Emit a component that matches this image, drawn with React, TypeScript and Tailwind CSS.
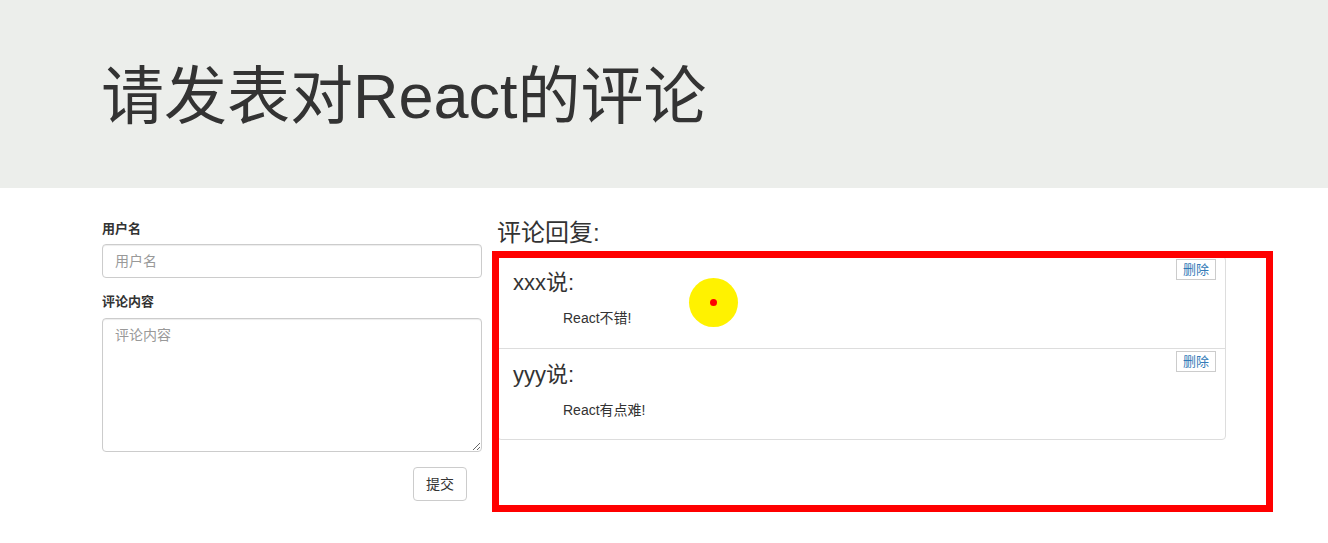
import { useState } from 'react';

interface Comment {
  username: string;
  content: string;
}

const FONT = "font-['Liberation_Sans','Noto_Sans_CJK_SC',sans-serif]";

function CommentItem({ c, first, onDelete }: { c: Comment; first: boolean; onDelete: () => void }) {
  return (
    <li className={`flex h-[91px] pl-[15px] pr-[9px] ${first ? '' : 'border-t border-[#ddd]'}`}>
      <div className="flex-1">
        <h4 className="mt-[12px] text-[22px] leading-[28px] text-[#333]">{c.username}说:</h4>
        <p className="ml-[50px] mt-[11px] text-[14px] leading-[20px] text-[#333]">{c.content}</p>
      </div>
      <button
        onClick={onDelete}
        className="mt-[2px] h-[21px] w-[40px] self-start border border-[#ccc] bg-white text-[13px] leading-[19px] text-[#337ab7]"
      >
        删除
      </button>
    </li>
  );
}

export default function App() {
  const [comments, setComments] = useState<Comment[]>([
    { username: 'xxx', content: 'React不错!' },
    { username: 'yyy', content: 'React有点难!' },
  ]);

  return (
    <div className={`relative min-h-[543px] bg-white text-[#333] ${FONT}`}>
      <div className="h-[188px] bg-[#eceeeb] pl-[101px] pt-[62px]">
        <h1 className="text-[63px] leading-[69px] font-normal text-[#333]">请发表对React的评论</h1>
      </div>

      <div className="flex pl-[102px] pt-[31px]">
        <form className="w-[380px]" onSubmit={(e) => e.preventDefault()}>
          <label className="block text-[13px] font-bold leading-[20px]">用户名</label>
          <input
            placeholder="用户名"
            className="mt-[5px] block h-[34px] w-full rounded-[4px] border border-[#ccc] px-[12px] text-[14px] shadow-[inset_0_1px_1px_rgba(0,0,0,0.075)] placeholder:text-[#999] outline-none"
          />
          <label className="mt-[14px] block text-[13px] font-bold leading-[20px]">评论内容</label>
          <textarea
            placeholder="评论内容"
            className="mt-[6px] block h-[134px] w-full rounded-[4px] border border-[#ccc] px-[12px] py-[6px] text-[14px] leading-[20px] shadow-[inset_0_1px_1px_rgba(0,0,0,0.075)] placeholder:text-[#999] outline-none"
          />
          <div className="mt-[15px] flex justify-end pr-[15px]">
            <button className="h-[34px] w-[54px] rounded-[4px] border border-[#ccc] bg-white text-[14px] text-[#333]">
              提交
            </button>
          </div>
        </form>

        <div className="ml-[15px] w-[729px]">
          <h3 className="text-[24px] leading-[28px] text-[#333]">评论回复:</h3>
          <ul className="mt-[9px] rounded-[4px] border border-[#ddd]">
            {comments.map((c, i) => (
              <CommentItem
                key={c.username}
                c={c}
                first={i === 0}
                onDelete={() => setComments(comments.filter((_, j) => j !== i))}
              />
            ))}
          </ul>
        </div>
      </div>

      {/* screen-recording annotation overlay */}
      <div className="pointer-events-none absolute left-[492px] top-[251px] h-[261px] w-[781px] border-[7px] border-[#ff0000]" />
      <div className="pointer-events-none absolute left-[689px] top-[278px] flex h-[49px] w-[49px] items-center justify-center rounded-full bg-[#fff200]">
        <div className="h-[7px] w-[7px] rounded-full bg-[#ff0000]" />
      </div>
    </div>
  );
}
